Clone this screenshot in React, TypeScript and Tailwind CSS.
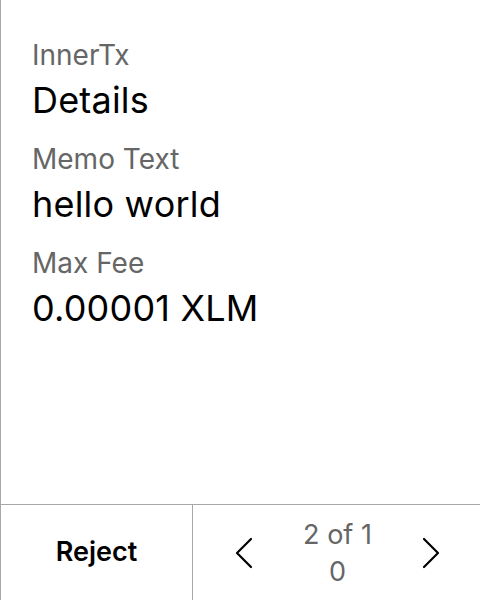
import React from 'react';

const fields = [
  { label: 'InnerTx', value: 'Details' },
  { label: 'Memo Text', value: 'hello world' },
  { label: 'Max Fee', value: '0.00001 XLM' },
];

const Chevron = ({ dir }: { dir: 'left' | 'right' }) => (
  <svg width="18" height="32" viewBox="0 0 18 32" fill="none" stroke="#000" strokeWidth="2.2" strokeLinecap="round" strokeLinejoin="round">
    {dir === 'left' ? <path d="M16 2 L2 16 L16 30" /> : <path d="M2 2 L16 16 L2 30" />}
  </svg>
);

export default function App() {
  return (
    <div
      className="flex h-[600px] w-[480px] flex-col border-l border-[#a8a8a8] bg-white text-black"
      style={{ fontFamily: 'Inter, "Noto Sans", sans-serif' }}
    >
      <div className="flex flex-1 flex-col gap-[20px] pl-[31px] pr-8 pt-[38px]">
        {fields.map((f) => (
          <div key={f.label} className="flex flex-col">
            <span className="text-[28px] leading-[34px] text-[#666]">{f.label}</span>
            <span className="mt-[6px] text-[36px] leading-[44px] tracking-[0.2px]">{f.value}</span>
          </div>
        ))}
      </div>
      <div className="flex h-[96px] border-t border-[#a8a8a8]">
        <button type="button" className="flex w-[192px] items-center justify-center border-r border-[#a8a8a8] text-[27px] font-semibold">
          Reject
        </button>
        <div className="flex flex-1 items-center justify-between pl-[42px] pr-[40px]">
          <Chevron dir="left" />
          <span className="w-[78px] break-all text-center text-[27px] leading-[37px] text-[#666]">2 of 10</span>
          <Chevron dir="right" />
        </div>
      </div>
    </div>
  );
}
